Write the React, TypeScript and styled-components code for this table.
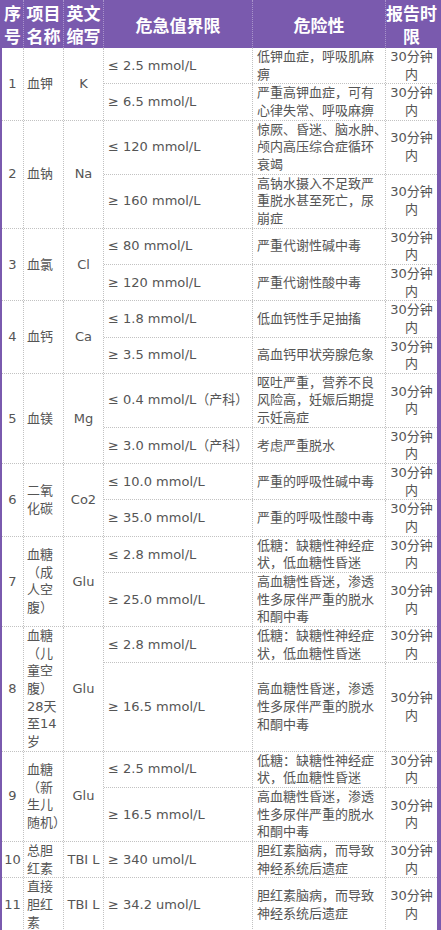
import type { ReactNode } from "react";
import styled, { createGlobalStyle } from "styled-components";

const PURPLE = "#7a5aae";
const LINE = "#c2c2c2";

const GlobalStyle = createGlobalStyle`
  html, body {
    margin: 0;
    padding: 0;
    background: #fff;
  }
  body {
    font-family: "DejaVu Sans", "Noto Sans CJK SC", sans-serif;
  }
`;

const Frame = styled.div`
  width: 441px;
  box-sizing: border-box;
  border-left: 2px solid ${PURPLE};
  border-right: 4px solid ${PURPLE};
  font-size: 13px;
  line-height: 17.65px;
  color: #555;
`;

const HeaderBar = styled.div`
  display: grid;
  grid-template-columns: 22px 40px 40px 149px 133px 1fr;
  background: ${PURPLE};
`;

const HeadCell = styled.div`
  display: flex;
  align-items: center;
  justify-content: center;
  box-sizing: border-box;
  min-width: 0;
  padding: 1px 0;
  color: #fff;
  font-family: "Noto Sans CJK SC", sans-serif;
  font-weight: 700;
  font-size: 17px;
  line-height: 23px;
  text-align: center;
  border-right: 1px dotted rgba(255, 255, 255, 0.35);
  &:last-child {
    border-right: none;
  }
`;

const ItemRow = styled.div`
  display: grid;
  grid-template-columns: 22px 40px 40px 1fr;
  border-bottom: 1px dotted ${LINE};
`;

const LimitList = styled.div`
  display: flex;
  flex-direction: column;
`;

const LimitRow = styled.div`
  display: grid;
  grid-template-columns: 149px 133px 1fr;
  border-bottom: 1px dotted ${LINE};
  &:last-child {
    flex: 1;
    border-bottom: none;
  }
`;

type Align = "left" | "center";

const Cell = styled.div<{ $align?: Align; $pad?: number }>`
  display: flex;
  align-items: center;
  justify-content: ${(p) => (p.$align === "center" ? "center" : "flex-start")};
  box-sizing: border-box;
  min-width: 0;
  padding: 0 ${(p) => p.$pad ?? 3}px;
  text-align: ${(p) => p.$align ?? "left"};
  border-right: 1px dotted ${LINE};
  &:last-child {
    border-right: none;
  }
`;

const CellText = styled.span`
  min-width: 0;
`;

// full-width punctuation squeezed to half width, as the original renders it at a line end
const Narrow = styled.span`
  font-feature-settings: "halt";
`;

type Limit = { value: string; risk: ReactNode };
type Item = { no: number; name: ReactNode; code: string; limits: Limit[] };

const lowSugar = "低糖：缺糖性神经症状，低血糖性昏迷";
const highSugar = "高血糖性昏迷，渗透性多尿伴严重的脱水和酮中毒";
const bilirubin = "胆红素脑病，而导致神经系统后遗症";

const items: Item[] = [
  {
    no: 1,
    name: "血钾",
    code: "K",
    limits: [
      { value: "≤ 2.5 mmol/L", risk: "低钾血症，呼吸肌麻痹" },
      { value: "≥ 6.5 mmol/L", risk: "严重高钾血症，可有心律失常、呼吸麻痹" },
    ],
  },
  {
    no: 2,
    name: "血钠",
    code: "Na",
    limits: [
      {
        value: "≤ 120 mmol/L",
        risk: (
          <>
            惊厥、昏迷、脑水肿<Narrow>、</Narrow>颅内高压综合症循环衰竭
          </>
        ),
      },
      { value: "≥ 160 mmol/L", risk: "高钠水摄入不足致严重脱水甚至死亡，尿崩症" },
    ],
  },
  {
    no: 3,
    name: "血氯",
    code: "Cl",
    limits: [
      { value: "≤ 80 mmol/L", risk: "严重代谢性碱中毒" },
      { value: "≥ 120 mmol/L", risk: "严重代谢性酸中毒" },
    ],
  },
  {
    no: 4,
    name: "血钙",
    code: "Ca",
    limits: [
      { value: "≤ 1.8 mmol/L", risk: "低血钙性手足抽搐" },
      { value: "≥ 3.5 mmol/L", risk: "高血钙甲状旁腺危象" },
    ],
  },
  {
    no: 5,
    name: "血镁",
    code: "Mg",
    limits: [
      { value: "≤ 0.4 mmol/L（产科）", risk: "呕吐严重，营养不良风险高，妊娠后期提示妊高症" },
      { value: "≥ 3.0 mmol/L（产科）", risk: "考虑严重脱水" },
    ],
  },
  {
    no: 6,
    name: "二氧化碳",
    code: "Co2",
    limits: [
      { value: "≤ 10.0 mmol/L", risk: "严重的呼吸性碱中毒" },
      { value: "≥ 35.0 mmol/L", risk: "严重的呼吸性酸中毒" },
    ],
  },
  {
    no: 7,
    name: (
      <>
        血糖（成人空腹<Narrow>）</Narrow>
      </>
    ),
    code: "Glu",
    limits: [
      { value: "≤ 2.8 mmol/L", risk: lowSugar },
      { value: "≥ 25.0 mmol/L", risk: highSugar },
    ],
  },
  {
    no: 8,
    name: (
      <>
        血糖（儿童空腹<Narrow>）</Narrow>28天至14岁
      </>
    ),
    code: "Glu",
    limits: [
      { value: "≤ 2.8 mmol/L", risk: lowSugar },
      { value: "≥ 16.5 mmol/L", risk: highSugar },
    ],
  },
  {
    no: 9,
    name: (
      <>
        血糖（新生儿随机<Narrow>）</Narrow>
      </>
    ),
    code: "Glu",
    limits: [
      { value: "≤ 2.5 mmol/L", risk: lowSugar },
      { value: "≥ 16.5 mmol/L", risk: highSugar },
    ],
  },
  {
    no: 10,
    name: "总胆红素",
    code: "TBI L",
    limits: [{ value: "≥ 340 umol/L", risk: bilirubin }],
  },
  {
    no: 11,
    name: "直接胆红素",
    code: "TBI L",
    limits: [{ value: "≥ 34.2 umol/L", risk: bilirubin }],
  },
];

const headers = ["序号", "项目名称", "英文缩写", "危急值界限", "危险性", "报告时限"];

export default function App() {
  return (
    <>
      <GlobalStyle />
      <Frame>
        <HeaderBar>
          {headers.map((h) => (
            <HeadCell key={h}>{h}</HeadCell>
          ))}
        </HeaderBar>
        {items.map((item) => (
          <ItemRow key={item.no}>
            <Cell $align="center" $pad={1}>
              {item.no}
            </Cell>
            <Cell>
              <CellText>{item.name}</CellText>
            </Cell>
            <Cell $align="center">{item.code}</Cell>
            <LimitList>
              {item.limits.map((limit) => (
                <LimitRow key={limit.value}>
                  <Cell $pad={4}>{limit.value}</Cell>
                  <Cell $pad={4}>
                    <CellText>{limit.risk}</CellText>
                  </Cell>
                  <Cell $align="center" $pad={2}>
                    30分钟内
                  </Cell>
                </LimitRow>
              ))}
            </LimitList>
          </ItemRow>
        ))}
      </Frame>
    </>
  );
}
